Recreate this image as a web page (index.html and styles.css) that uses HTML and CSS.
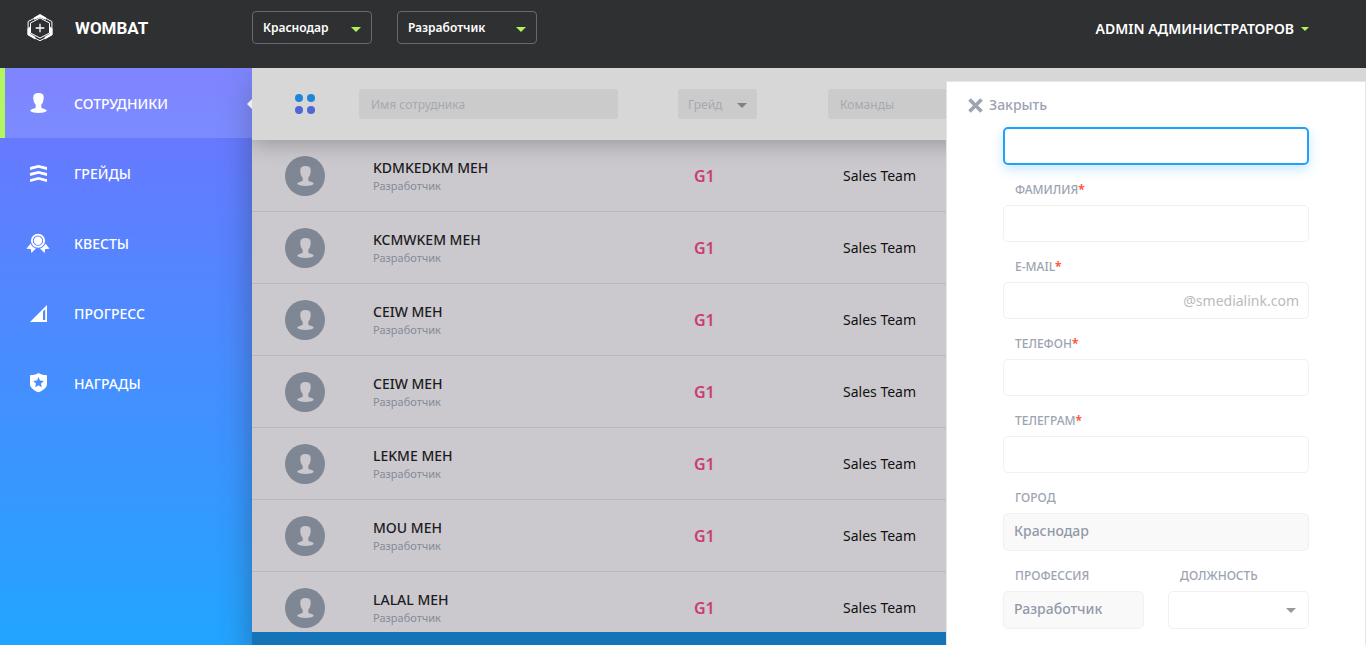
FILE: index.html
```html
<!DOCTYPE html>
<html lang="ru">
<head>
<meta charset="utf-8">
<title>Wombat</title>
<link rel="stylesheet" href="styles.css">
</head>
<body>
<svg class="sprite" aria-hidden="true">
  <symbol id="person" viewBox="0 0 17 20"><path d="M8.500 0C12 0 13.800 1.300 13.700 4.500 13.600 9 12.500 10 11.300 11.800v2.600c.7 1.200 4.100 1 5.600 3.400-2.600 2.900-14.200 2.900-16.800 0C1.600 15.400 5 15.600 5.700 14.400v-2.600C4.500 10 3.400 9 3.300 4.500 3.200 1.300 5 0 8.500 0z"/></symbol>
</svg>
<div class="app">
  <header class="topbar">
    <a class="brand" href="#">
      <svg class="brand-logo" viewBox="0 0 26 28" aria-hidden="true">
        <path d="M13 1.300 24.900 7.500v13L13 26.700 1.100 20.500v-13z" fill="none" stroke="#fff"/>
        <path d="M13 4 22.500 9v10L13 24 3.500 19V9z" fill="none" stroke="#fff"/>
        <path d="M7 3.600 13 0l6 3.600v2.200L13 3.400 7 5.800zM.5 14.500l2.800-2v7.300l5 2.900v2.700L.5 21zM25.500 14.500l-2.800-2v7.300l-5 2.900v2.700l7.800-4.400z" fill="#fff"/>
        <path d="M13 9.700v8.600M8.700 14h8.600" stroke="#fff" stroke-width="1.300"/>
      </svg>
      <span class="brand-name">WOMBAT</span>
    </a>
    <div class="pickers">
      <span class="picker picker-city"><select aria-label="Город"><option>Краснодар</option></select></span>
      <span class="picker picker-role"><select aria-label="Профессия"><option>Разработчик</option></select></span>
    </div>
    <button class="account" type="button">ADMIN АДМИНИСТРАТОРОВ</button>
  </header>

  <nav class="sidebar">
    <a class="nav-item is-active" href="#"><svg class="nav-icon" viewBox="0 0 24 24" aria-hidden="true"><use href="#person" x="4" y="1" width="17" height="20"/></svg>СОТРУДНИКИ</a>
    <a class="nav-item" href="#"><svg class="nav-icon" viewBox="0 0 24 24" aria-hidden="true"><path d="M4 5 12.500 2.900 21 5v2.900L12.500 5.800 4 7.900zM4 11l8.500-2.100L21 11v2.900l-8.500-2.100L4 13.900zM4 17.200l8.500-2.300 8.500 2.300v2.900l-8.500-2.300L4 20.100z"/></svg>ГРЕЙДЫ</a>
    <a class="nav-item" href="#"><svg class="nav-icon" viewBox="0 0 24 24" aria-hidden="true"><circle cx="12" cy="8.700" r="6.100" fill="none" stroke="#fff" stroke-width="1.900"/><circle cx="12" cy="8.700" r="4.200"/><path d="M4.600 11.600c1 2.600 2.900 4.200 5.400 4.900L5.400 20.900l-.6-3.800-4.400-.3zM19.400 11.600c-1 2.600-2.900 4.200-5.400 4.900l4.600 4.400.6-3.800 4.400-.3z"/></svg>КВЕСТЫ</a>
    <a class="nav-item" href="#"><svg class="nav-icon" viewBox="0 0 24 24" aria-hidden="true"><path fill-rule="evenodd" d="M4 20 21 3v17zM17 9.500V18h2.200V7.300z"/></svg>ПРОГРЕСС</a>
    <a class="nav-item" href="#"><svg class="nav-icon" viewBox="0 0 24 24" aria-hidden="true"><path fill-rule="evenodd" d="M12.500 1C15 2.500 18 3.200 21 3.300V12c0 4-4.500 6.800-8.500 8.300C8.500 18.800 4 16 4 12V3.300C7 3.200 10 2.500 12.500 1zM12.500 5l-1.500 3.500-3.900.4 2.900 2.500-.8 3.800 3.300-2 3.300 2-.8-3.800 2.900-2.500-3.900-.4z"/></svg>НАГРАДЫ</a>
  </nav>

  <main class="content">
    <div class="filters">
      <svg class="dots" viewBox="0 0 20 20" aria-hidden="true"><g fill="#2087d8"><circle cx="4" cy="4" r="4"/><circle cx="16" cy="4" r="4"/></g><g fill="#4f67d8"><circle cx="4" cy="16" r="4"/><circle cx="16" cy="16" r="4"/></g></svg>
      <input class="filter filter-name" type="text" placeholder="Имя сотрудника" aria-label="Имя сотрудника">
      <span class="filter-grade"><select class="filter" aria-label="Грейд"><option>Грейд</option></select></span>
      <input class="filter filter-team" type="text" placeholder="Команды" aria-label="Команды">
    </div>
    <div class="list">
      <table class="people">
        <colgroup><col class="col-avatar"><col class="col-name"><col class="col-grade"><col></colgroup>
        <tbody>
          <tr><td><span class="avatar"><svg aria-hidden="true"><use href="#person"/></svg></span></td><td><div class="name">KDMKEDKM МЕН</div><div class="role">Разработчик</div></td><td class="grade">G1</td><td class="team">Sales Team</td></tr>
          <tr><td><span class="avatar"><svg aria-hidden="true"><use href="#person"/></svg></span></td><td><div class="name">KCMWKEM МЕН</div><div class="role">Разработчик</div></td><td class="grade">G1</td><td class="team">Sales Team</td></tr>
          <tr><td><span class="avatar"><svg aria-hidden="true"><use href="#person"/></svg></span></td><td><div class="name">CEIW МЕН</div><div class="role">Разработчик</div></td><td class="grade">G1</td><td class="team">Sales Team</td></tr>
          <tr><td><span class="avatar"><svg aria-hidden="true"><use href="#person"/></svg></span></td><td><div class="name">CEIW МЕН</div><div class="role">Разработчик</div></td><td class="grade">G1</td><td class="team">Sales Team</td></tr>
          <tr><td><span class="avatar"><svg aria-hidden="true"><use href="#person"/></svg></span></td><td><div class="name">LEKME МЕН</div><div class="role">Разработчик</div></td><td class="grade">G1</td><td class="team">Sales Team</td></tr>
          <tr><td><span class="avatar"><svg aria-hidden="true"><use href="#person"/></svg></span></td><td><div class="name">MOU МЕН</div><div class="role">Разработчик</div></td><td class="grade">G1</td><td class="team">Sales Team</td></tr>
          <tr><td><span class="avatar"><svg aria-hidden="true"><use href="#person"/></svg></span></td><td><div class="name">LALAL МЕН</div><div class="role">Разработчик</div></td><td class="grade">G1</td><td class="team">Sales Team</td></tr>
        </tbody>
      </table>
    </div>
  </main>
</div>

<aside class="drawer">
  <button class="close" type="button"><svg viewBox="0 0 15 15" aria-hidden="true"><path d="m1.500 1.500 12 12m0-12-12 12" stroke="currentColor" stroke-width="3.600"/></svg>Закрыть</button>
  <form class="form">
    <input class="control is-current" type="text" aria-label="Имя">
    <label class="label" for="surname">ФАМИЛИЯ<b>*</b></label>
    <input class="control" id="surname" type="text">
    <label class="label" for="email">E-MAIL<b>*</b></label>
    <div class="control suffixed"><input id="email" type="text"><span>@smedialink.com</span></div>
    <label class="label" for="phone">ТЕЛЕФОН<b>*</b></label>
    <input class="control" id="phone" type="text">
    <label class="label" for="telegram">ТЕЛЕГРАМ<b>*</b></label>
    <input class="control" id="telegram" type="text">
    <label class="label" for="city">ГОРОД</label>
    <input class="control" id="city" type="text" value="Краснодар" disabled>
    <div class="pair">
      <div><label class="label" for="job">ПРОФЕССИЯ</label><input class="control" id="job" type="text" value="Разработчик" disabled></div>
      <div><label class="label" for="position">ДОЛЖНОСТЬ</label><span class="select-box"><select class="control" id="position"><option></option></select></span></div>
    </div>
  </form>
</aside>
</body>
</html>
```
FILE: styles.css
```css
* { box-sizing: border-box; }
body { margin: 0; overflow: hidden; font: 14px/20px "Noto Sans", "Open Sans", sans-serif; }
input, select, button { font: inherit; color: inherit; margin: 0; }
select { appearance: none; }
.sprite { position: absolute; width: 0; height: 0; }

.app { display: grid; grid-template: 68px minmax(0, 1fr) / 252px minmax(0, 1fr); height: 100vh; }
.topbar { grid-column: 1 / -1; display: grid; grid-template-columns: 252px 1fr auto; align-items: start; background: #2f3031; color: #fff; z-index: 2; }
.brand { display: flex; align-items: center; gap: 22px; padding: 14px 0 0 27px; color: #fff; text-decoration: none; }
.brand-logo { width: 26px; height: 28px; }
.brand-name { font: 700 17px/28px Roboto, sans-serif; }
.pickers { display: flex; gap: 25px; padding-top: 11px; }
.picker { position: relative; }
.picker select { width: 100%; height: 33px; padding: 0 10px; background: none; border: 1px solid #676873; border-radius: 4px; color: #fff; font-size: 12px; font-weight: 600; }
.picker-city { width: 120px; }
.picker-role { width: 140px; }
.picker::after, .filter-grade::after, .select-box::after { content: ""; position: absolute; right: 11px; top: 16px; border: 5px solid transparent; border-top-color: #b0f25c; border-bottom: 0; pointer-events: none; }
.account { display: flex; align-items: center; gap: 7px; margin: 19px 57px 0 0; padding: 0; background: none; border: 0; font-weight: 600; }
.account::after { content: ""; border: 4px solid transparent; border-top-color: #b0f25c; border-bottom: 0; }

.sidebar { background: linear-gradient(#6a70ff, #667aff 13%, #21a5ff); }
.nav-item { display: flex; align-items: center; gap: 24px; height: 70px; padding: 2px 0 0 26px; color: #fff; font-weight: 500; text-decoration: none; }
.nav-icon { width: 24px; height: 24px; fill: #fff; }
.is-active { position: relative; padding-left: 21px; border-left: 5px solid #b2f75f; background: rgba(255, 255, 255, .14); }
.is-active::after { content: ""; position: absolute; right: 0; top: 31px; border: 5px solid transparent; border-right-color: #eee; border-left: 0; z-index: 1; }

.content { display: flex; flex-direction: column; min-width: 0; padding-bottom: 13px; background: #1574b8; box-shadow: 0 16px 30px rgba(40, 50, 80, .45); }
.filters { display: flex; flex: none; align-items: center; height: 72px; padding-left: 43px; background: #d7d7d7; box-shadow: 0 4px 20px rgba(0, 0, 0, .25); clip-path: inset(0 0 -32px); z-index: 1; }
.dots { flex: none; width: 20px; height: 20px; margin-right: 44px; }
.filter { height: 30px; padding: 0 12px; border: 0; border-radius: 3px; background: #cbcbcb; color: #a5a9b0; font-size: 12px; }
.filter::placeholder { color: #a5a9b0; opacity: 1; }
.filter-name { width: 259px; }
.filter-grade { position: relative; margin: 0 71px 0 60px; }
.filter-grade .filter { display: block; width: 79px; padding: 2px 10px 0; }
.filter-grade::after { right: 10px; top: 14px; border-top-color: #808080; }
.filter-team { width: 259px; }
.list { flex: 1; min-height: 0; overflow: hidden; background: #cbc9ce; }
.people { width: 100%; table-layout: fixed; border-collapse: separate; border-spacing: 0; }
.col-avatar { width: 121px; }
.col-name { width: 321px; }
.col-grade { width: 149px; }
.people td { height: 72px; padding: 0; border-bottom: 1px solid #b9b8be; }
.avatar { display: grid; place-items: center; width: 40px; height: 40px; margin-left: 33px; border-radius: 50%; background: #7f8694; }
.avatar svg { width: 17px; height: 20px; fill: #cbc9ce; }
.name { color: #1c1c1f; font-weight: 500; line-height: 20px; }
.role { color: #858b97; font-size: 11px; line-height: 16px; }
.people .grade { color: #c93d72; font-size: 16px; font-weight: 600; }
.people .team { color: #111; }

.drawer { position: fixed; top: 81px; right: 0; bottom: 0; width: 420px; overflow: hidden; background: #fff; border: solid #e5e5e7; border-width: 1px 1px 0; z-index: 3; }
.close { display: flex; align-items: center; gap: 6px; height: 20px; margin: 13px 0 12px 21px; padding: 0; border: 0; background: none; color: #9ca4b2; font-weight: 500; }
.close svg { width: 15px; height: 15px; }
.form { padding: 0 56px; }
.label { display: block; padding: 15px 0 5px 12px; color: #9ca4b2; font-size: 12px; font-weight: 500; line-height: 20px; }
.label b { color: #ff5a43; }
.control { display: block; width: 100%; height: 37px; padding: 0 10px; border: 1px solid #f1f1f2; border-radius: 5px; background: #fff; color: #9299a9; font-weight: 500; outline: 0; }
.control:disabled, .pair .control { height: 38px; }
.control:disabled { padding-bottom: 3px; background: #f9f9f9; }
.is-current { height: 38px; border: 2px solid #20a2f8; box-shadow: 0 4px 12px rgba(32, 162, 248, .25); }
.suffixed { display: flex; align-items: center; padding-right: 9px; }
.suffixed input { flex: 1; min-width: 0; height: 30px; padding: 0; border: 0; outline: 0; background: none; }
.suffixed span { color: #bbb; font-weight: 400; }
.pair { display: grid; grid-template-columns: 1fr 1fr; gap: 24px; }
.select-box { position: relative; display: block; }
.select-box::after { right: 13px; top: 17px; border-top-color: #999; }
```
